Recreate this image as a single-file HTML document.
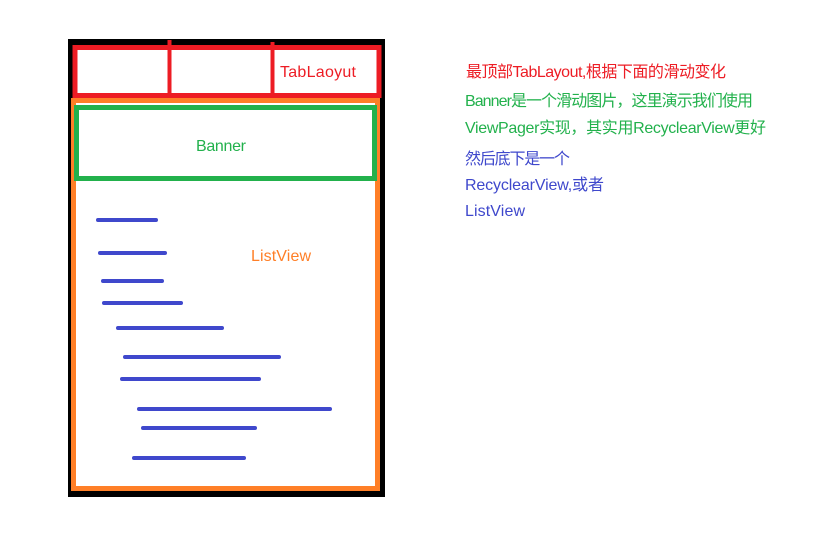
<!DOCTYPE html>
<html><head><meta charset="utf-8"><style>html,body{margin:0;padding:0;background:#fff;width:815px;height:551px;overflow:hidden}</style></head>
<body>
<svg width="815" height="551" xmlns="http://www.w3.org/2000/svg" style="display:block;font-family:'Liberation Sans','Noto Sans CJK SC',sans-serif">
<rect x="0" y="0" width="815" height="551" fill="#fff"/>
<rect x="68" y="39" width="317" height="458" fill="#000"/>
<rect x="73" y="98" width="305" height="392" fill="#fff"/>
<rect x="73" y="46" width="308" height="52" fill="#fff"/>
<!-- orange -->
<rect x="73.5" y="100.5" width="304" height="388" fill="none" stroke="#ff7f27" stroke-width="5"/>
<!-- red tabs -->
<rect x="75" y="47.5" width="304" height="48" fill="none" stroke="#ed1c24" stroke-width="5"/>
<line x1="169.5" y1="40" x2="169.5" y2="96" stroke="#ed1c24" stroke-width="4"/>
<line x1="272.5" y1="42" x2="272.5" y2="96" stroke="#ed1c24" stroke-width="4"/>
<!-- green -->
<rect x="76.5" y="107.5" width="298" height="71" fill="none" stroke="#22b14c" stroke-width="5"/>
<text x="280" y="77" font-size="16" fill="#ed1c24" textLength="76">TabLaoyut</text>
<text x="196" y="151" font-size="16" fill="#22b14c" textLength="50">Banner</text>
<text x="251" y="261" font-size="16" fill="#ff7f27" textLength="60">ListView</text>
<g stroke="#3f48cc" stroke-width="4" stroke-linecap="round">
<line x1="98" y1="220" x2="156" y2="220"/>
<line x1="100" y1="253" x2="165" y2="253"/>
<line x1="103" y1="281" x2="162" y2="281"/>
<line x1="104" y1="303" x2="181" y2="303"/>
<line x1="118" y1="328" x2="222" y2="328"/>
<line x1="125" y1="357" x2="279" y2="357"/>
<line x1="122" y1="379" x2="259" y2="379"/>
<line x1="139" y1="409" x2="330" y2="409"/>
<line x1="143" y1="428" x2="255" y2="428"/>
<line x1="134" y1="458" x2="244" y2="458"/>
</g>
<g font-size="16">
<text x="466" y="77" fill="#ed1c24" textLength="260">最顶部TabLayout,根据下面的滑动变化</text>
<text x="465" y="106" fill="#22b14c" textLength="288">Banner是一个滑动图片，这里演示我们使用</text>
<text x="465" y="133" fill="#22b14c" textLength="301">ViewPager实现，其实用RecyclearView更好</text>
<text x="465" y="164" fill="#3f48cc" textLength="105">然后底下是一个</text>
<text x="465" y="190" fill="#3f48cc" textLength="139">RecyclearView,或者</text>
<text x="465" y="216" fill="#3f48cc" textLength="60">ListView</text>
</g>
</svg>
</body></html>
